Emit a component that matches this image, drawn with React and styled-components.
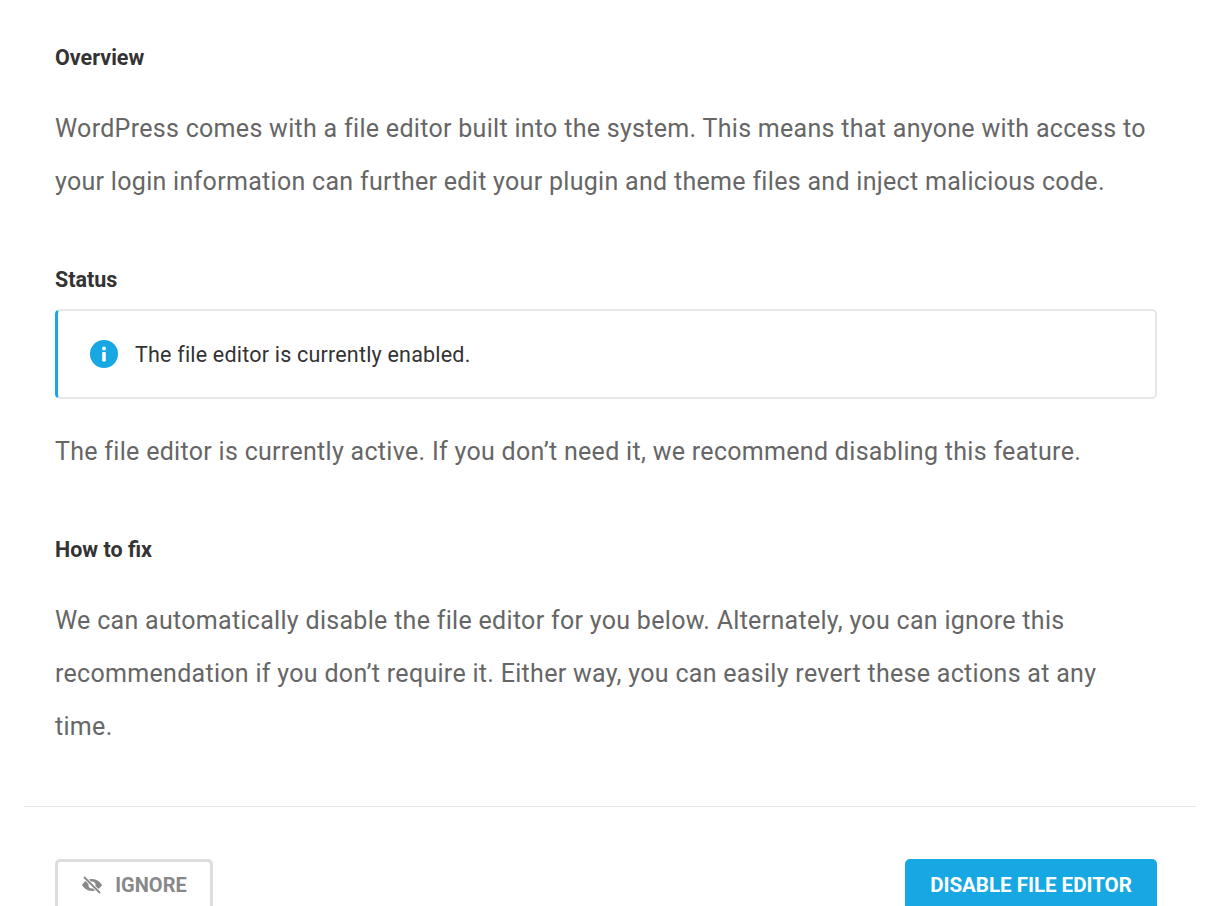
import React from "react";
import styled, { createGlobalStyle } from "styled-components";

const Global = createGlobalStyle`
  body { margin: 0; background: #fff; font-family: Roboto, "Liberation Sans", sans-serif; }
`;
const Wrap = styled.div`padding: 0 24px; width: 1172px;`;
const Body = styled.div`padding: 42px 39px 28px 31px;`;
const H = styled.h4`
  margin: 0; font-size: 21.5px; font-weight: 700; color: #333; line-height: 32px;
  margin-top: ${p => p.$mt || 0}px;
`;
const P = styled.p`
  margin: ${p => p.$mt || 0}px 0 0; font-size: 25px; color: #666; line-height: 53px; letter-spacing: 0.3px;
`;
const Notice = styled.div`
  margin-top: 13px; height: 86px; border: 2px solid #e6e6e6; border-left: 3px solid #17a8e3;
  border-radius: 5px; display: flex; align-items: center; padding-left: 32px; gap: 17px;
  font-size: 21.5px; color: #333; letter-spacing: 0.2px;
`;
const Divider = styled.div`height: 1px; background: #e6e6e6; margin-top: 25px;`;
const Footer = styled.div`display: flex; justify-content: space-between; padding: 52px 39px 0 31px;`;
const Ghost = styled.button`
  height: 52px; width: 158px; border: 3px solid #ddd; border-radius: 5px; background: #fff;
  display: flex; align-items: center; justify-content: center; gap: 12px;
  font-family: inherit; font-size: 20px; font-weight: 700; color: #888;
`;
const Primary = styled.button`
  height: 52px; width: 252px; border: none; border-radius: 5px; background: #17a8e3;
  font-family: inherit; font-size: 20.5px; font-weight: 700; color: #fff;
`;

export default function App() {
  return (
    <Wrap>
      <Global />
      <Body>
        <H>Overview</H>
        <P $mt={28}>WordPress comes with a file editor built into the system. This means that anyone with access to your login information can further edit your plugin and theme files and inject malicious code.</P>
        <H $mt={56}>Status</H>
        <Notice>
          <svg width="28" height="28" viewBox="0 0 28 28">
            <circle cx="14" cy="14" r="14" fill="#17a8e3" />
            <circle cx="14" cy="8.5" r="2" fill="#fff" />
            <rect x="12.2" y="12" width="3.6" height="9.5" rx="1" fill="#fff" />
          </svg>
          The file editor is currently enabled.
        </Notice>
        <P $mt={26}>The file editor is currently active. If you don’t need it, we recommend disabling this feature.</P>
        <H $mt={56}>How to fix</H>
        <P $mt={28}>We can automatically disable the file editor for you below. Alternately, you can ignore this recommendation if you don’t require it. Either way, you can easily revert these actions at any time.</P>
      </Body>
      <Divider />
      <Footer>
        <Ghost>
          <svg width="22" height="18" viewBox="0 0 22 18">
            <path d="M11 3C6 3 2.5 6.5 1 9c1.5 2.5 5 6 10 6s8.5-3.5 10-6c-1.5-2.5-5-6-10-6z" fill="#888" />
            <circle cx="11" cy="9" r="3.5" fill="#fff" />
            <path d="M3 1l16 16" stroke="#fff" strokeWidth="3.5" />
            <path d="M3 1l16 16" stroke="#888" strokeWidth="1.8" />
          </svg>
          IGNORE
        </Ghost>
        <Primary>DISABLE FILE EDITOR</Primary>
      </Footer>
    </Wrap>
  );
}
